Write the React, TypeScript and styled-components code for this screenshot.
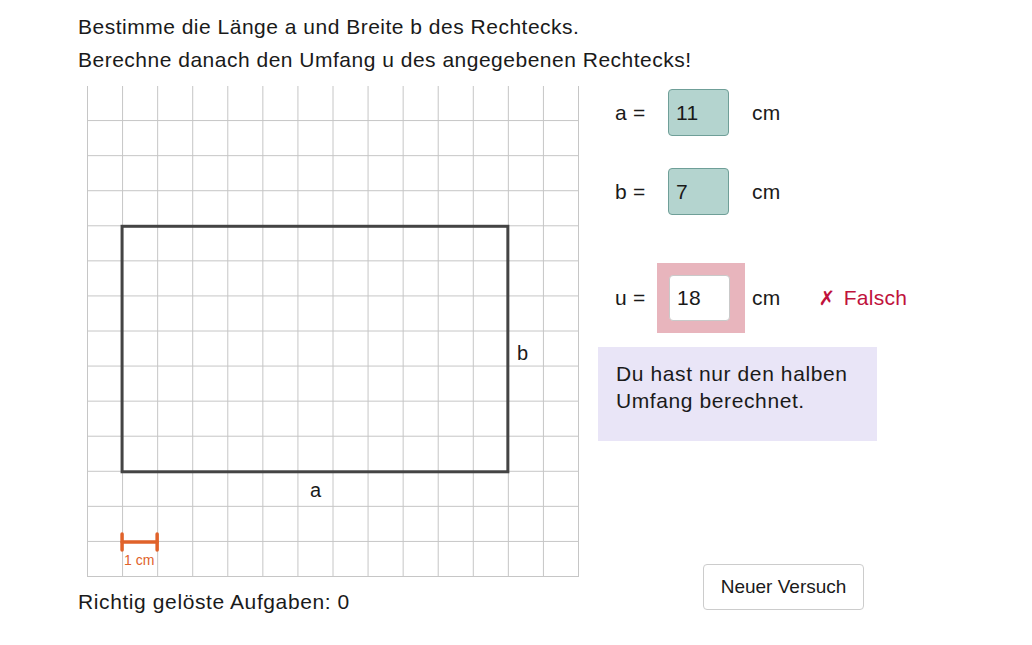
import React from "react";
import styled, { createGlobalStyle } from "styled-components";

const GlobalStyle = createGlobalStyle`
  html, body {
    margin: 0;
    padding: 0;
    background: #ffffff;
  }
  body {
    font-family: "Liberation Sans", Arial, sans-serif;
    color: #1a1a1a;
  }
`;

const Page = styled.div`
  width: 1032px;
  height: 645px;
  padding: 10px 0 0 78px;
  box-sizing: border-box;
`;

const Title = styled.div`
  font-size: 21px;
  line-height: 33px;
  letter-spacing: 0.5px;
`;

const Content = styled.div`
  display: flex;
  margin-top: 10px;
`;

const LeftColumn = styled.div`
  display: flex;
  flex-direction: column;
`;

const GridWrap = styled.div`
  margin-left: 9px;
  width: 492px;
  height: 492px;
`;

const Score = styled.div`
  font-size: 21px;
  line-height: 33px;
  letter-spacing: 0.6px;
  margin-top: 7px;
`;

const RightColumn = styled.div`
  display: flex;
  flex-direction: column;
  margin-left: 19px;
  width: 330px;
`;

const Row = styled.div<{ $top: number }>`
  display: flex;
  align-items: center;
  padding-left: 17px;
  margin-top: ${(p) => p.$top}px;
  font-size: 21px;
  letter-spacing: 0.3px;
`;

const Label = styled.span`
  width: 42px;
  white-space: nowrap;
`;

const Slot = styled.div<{ $wrong?: boolean }>`
  width: 88px;
  height: ${(p) => (p.$wrong ? 70 : 47)}px;
  box-sizing: border-box;
  padding-left: ${(p) => (p.$wrong ? 12 : 11)}px;
  display: flex;
  align-items: center;
  background: ${(p) => (p.$wrong ? "#e8b5bd" : "transparent")};
`;

const Field = styled.div<{ $correct?: boolean }>`
  width: 61px;
  height: ${(p) => (p.$correct ? 47 : 46)}px;
  box-sizing: border-box;
  border-radius: 4px;
  border: 1px solid ${(p) => (p.$correct ? "#6f9f98" : "#c9c9c9")};
  background: ${(p) => (p.$correct ? "#b4d4cf" : "#ffffff")};
  display: flex;
  align-items: center;
  padding-left: 7px;
  font-size: 21px;
`;

const Unit = styled.span<{ $gap: number }>`
  margin-left: ${(p) => p.$gap}px;
`;

const Verdict = styled.span`
  margin-left: 38px;
  color: #c0123c;
  display: flex;
  align-items: center;
  gap: 8px;
`;

const Cross = styled.span`
  font-family: "DejaVu Sans", sans-serif;
  font-weight: bold;
  font-size: 20px;
`;

const Feedback = styled.div`
  margin-top: 14px;
  width: 279px;
  height: 94px;
  box-sizing: border-box;
  background: #e9e5f7;
  padding: 13px 0 0 18px;
  font-size: 21px;
  line-height: 27px;
  letter-spacing: 0.6px;
`;

const Button = styled.button`
  margin-top: 123px;
  margin-left: 105px;
  width: 161px;
  height: 46px;
  background: #ffffff;
  border: 1px solid #cccccc;
  border-radius: 4px;
  font-family: "Liberation Sans", Arial, sans-serif;
  font-size: 19px;
  color: #1a1a1a;
  cursor: pointer;
`;

const CELL = 491 / 14;

function Grid() {
  const lines = [];
  for (let i = 0; i <= 14; i++) {
    const x = 0.5 + i * CELL;
    lines.push(<line key={"v" + i} x1={x} y1={0} x2={x} y2={491} />);
    if (i > 0) {
      const y = i * CELL - 0.5;
      lines.push(<line key={"h" + i} x1={0} y1={y} x2={491} y2={y} />);
    }
  }
  const x0 = CELL;
  const x1 = 12 * CELL;
  const y0 = 4 * CELL;
  const y1 = 11 * CELL;
  return (
    <svg width="492" height="492" viewBox="0 0 492 492">
      <g stroke="#c6c6c6" strokeWidth="1">{lines}</g>
      <rect
        x={x0}
        y={y0}
        width={x1 - x0}
        height={y1 - y0}
        fill="none"
        stroke="#444444"
        strokeWidth="3"
      />
      <text x={223} y={411} fontSize="20" fill="#1a1a1a" fontFamily="Liberation Sans, Arial, sans-serif">
        a
      </text>
      <text x={430} y={274} fontSize="20" fill="#1a1a1a" fontFamily="Liberation Sans, Arial, sans-serif">
        b
      </text>
      <g stroke="#e0622a" strokeWidth="3.5" strokeLinecap="round">
        <line x1={x0} y1={456} x2={2 * CELL} y2={456} />
        <line x1={x0} y1={448} x2={x0} y2={464} />
        <line x1={2 * CELL} y1={448} x2={2 * CELL} y2={464} />
      </g>
      <text x={37} y={479} fontSize="14" fill="#e0622a" fontFamily="Liberation Sans, Arial, sans-serif">
        1 cm
      </text>
    </svg>
  );
}

export default function App() {
  return (
    <Page>
      <GlobalStyle />
      <Title>
        Bestimme die Länge a und Breite b des Rechtecks.
        <br />
        Berechne danach den Umfang u des angegebenen Rechtecks!
      </Title>
      <Content>
        <LeftColumn>
          <GridWrap>
            <Grid />
          </GridWrap>
          <Score>Richtig gelöste Aufgaben: 0</Score>
        </LeftColumn>
        <RightColumn>
          <Row $top={3}>
            <Label>a =</Label>
            <Slot>
              <Field $correct>11</Field>
            </Slot>
            <Unit $gap={7}>cm</Unit>
          </Row>
          <Row $top={32}>
            <Label>b =</Label>
            <Slot>
              <Field $correct>7</Field>
            </Slot>
            <Unit $gap={7}>cm</Unit>
          </Row>
          <Row $top={48}>
            <Label>u =</Label>
            <Slot $wrong>
              <Field>18</Field>
            </Slot>
            <Unit $gap={7}>cm</Unit>
            <Verdict>
              <Cross>✗</Cross>
              Falsch
            </Verdict>
          </Row>
          <Feedback>
            Du hast nur den halben
            <br />
            Umfang berechnet.
          </Feedback>
          <Button>Neuer Versuch</Button>
        </RightColumn>
      </Content>
    </Page>
  );
}
